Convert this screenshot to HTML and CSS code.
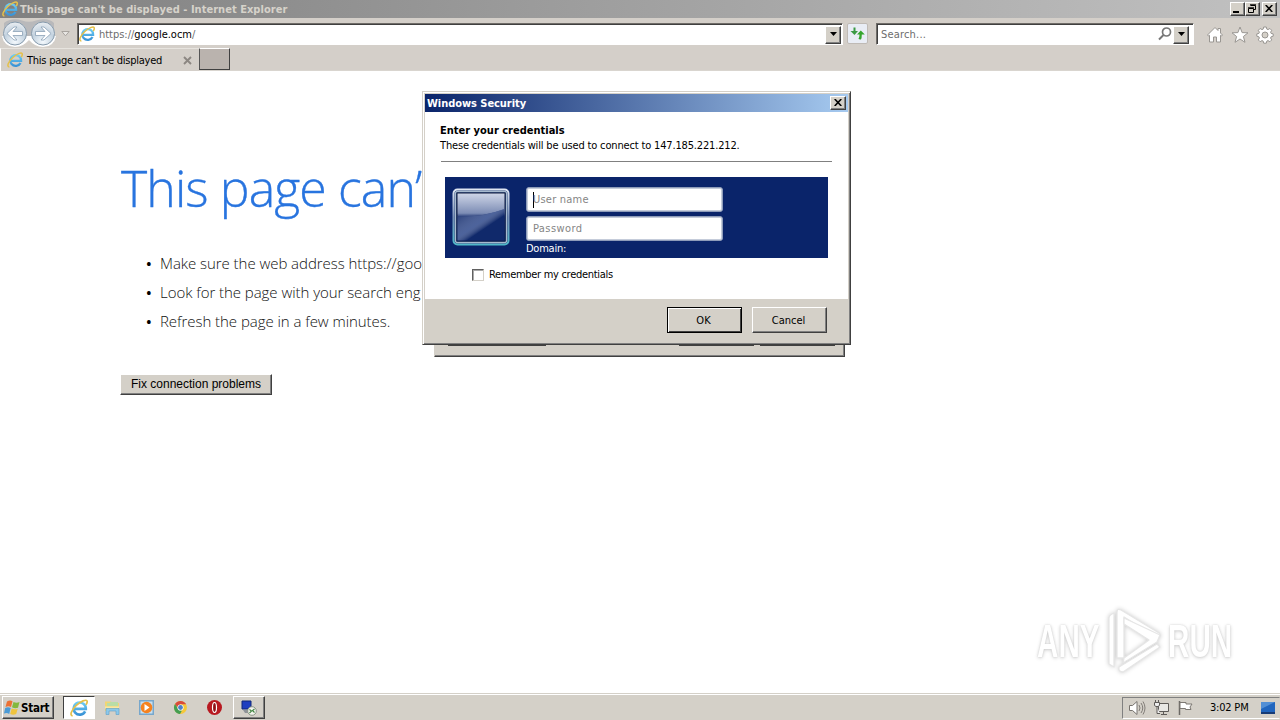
FILE: index.html
```
<!DOCTYPE html>
<html lang="en">
<head>
<meta charset="utf-8">
<title>This page can't be displayed</title>
<link rel="stylesheet" href="styles.css">
</head>
<body>
<svg class="defs" width="0" height="0">
  <defs>
    <linearGradient id="ieblue" x1="0" y1="0" x2="0" y2="1"><stop offset="0" stop-color="#6cccf4"/><stop offset="1" stop-color="#3a93d6"/></linearGradient>
    <radialGradient id="orb" cx=".5" cy=".85" r=".8"><stop offset="0" stop-color="#f4f9fd"/><stop offset=".6" stop-color="#c3d2df"/><stop offset="1" stop-color="#e6ebf0"/></radialGradient>
    <linearGradient id="tile" x1="0" y1="0" x2="0" y2="1"><stop offset="0" stop-color="#d0d7e8"/><stop offset=".42" stop-color="#7d8db5"/><stop offset=".5" stop-color="#243b78"/><stop offset="1" stop-color="#0c2466"/></linearGradient>
    <linearGradient id="frame" x1="0" y1="0" x2="0" y2="1"><stop offset="0" stop-color="#dfe6f2"/><stop offset=".5" stop-color="#7891b8"/><stop offset="1" stop-color="#50b8c8"/></linearGradient>
    <linearGradient id="sheen" x1="0" y1="0" x2="1" y2="1"><stop offset="0" stop-color="#fff" stop-opacity="0"/><stop offset=".45" stop-color="#7f93c4" stop-opacity=".55"/><stop offset=".6" stop-color="#fff" stop-opacity="0"/></linearGradient>
    <symbol id="ie" viewBox="0 0 16 16">
      <path d="M13.500 11A5.400 5.400 0 1 1 14.100 8.800H4.300" fill="none" stroke="url(#ieblue)" stroke-width="2.300"/>
      <path d="M2.400 14.900C-.6 15 1.200 9.700 5.600 5.700 9.700 1.900 14.300.1 15.100 1.700c.5 1-.2 2.400-.9 3.400" fill="none" stroke="#e5c04a" stroke-width="1.500"/>
    </symbol>
    <symbol id="down" viewBox="0 0 9 5"><path d="M1 0h7L4.500 4z"/></symbol>
    <symbol id="close" viewBox="0 0 8 7"><path d="M.7 0 7.300 7M7.300 0 .7 7" stroke="#000" stroke-width="1.600"/></symbol>
  </defs>
</svg>
<div class="screen">
  <header class="titlebar">
    <svg class="ie-icon"><use href="#ie"/></svg>
    <span class="title">This page can't be displayed - Internet Explorer</span>
    <div class="winbtns">
      <i class="wbtn"><svg width="10" height="9"><path d="M1 7h6v2H1z"/></svg></i>
      <i class="wbtn"><svg width="10" height="9"><path d="M3.500 1.500h5v4h-2M1.500 4.500h5v4h-5zM3 .8h6M1 3.800h6" fill="none" stroke="#000"/></svg></i>
      <i class="wbtn gap"><svg width="8" height="7"><use href="#close"/></svg></i>
    </div>
  </header>
  <nav class="navbar">
    <svg class="history" width="58" height="29" viewBox="0 0 58 29">
      <path d="M4 4C9 0 16-.5 22 1.500Q29 4 36 1.500C44-.5 50 0 54 4V23Q50 27 43 27 36 27 29 20 22 27 15 27 8 27 4 23z" fill="#b9b9bb"/>
      <path d="M2 17q2 11 13 11 8 0 14-7 6 7 14 7 11 0 13-11z" fill="#fff"/>
      <g fill="url(#orb)" stroke="#879bad"><circle cx="15" cy="14.500" r="11.500"/><circle cx="43" cy="14.500" r="11.500"/></g>
      <g fill="#fff" stroke="#8ca1b6" stroke-width=".8"><path d="M7 14.500l7-6.500h3L13 12.500h9.500v4H13l4 4.500h-3z"/><path d="M51 14.500l-7-6.500h-3l4 4.500h-9.500v4H45l-4 4.500h3z"/></g>
    </svg>
    <svg class="hist-arrow" width="9" height="6"><path d="M.8.500h7.400L4.500 4.800z" fill="#e8e6e3" stroke="#a9a49f"/></svg>
    <div class="field address">
      <svg class="ie-icon"><use href="#ie"/></svg>
      <span class="url">https://<b>google.ocm</b>/</span>
      <i class="drop"><svg width="9" height="5"><use href="#down"/></svg></i>
    </div>
    <i class="refresh"><svg width="17" height="15"><path d="M4.500 1.500h2v3.500h2.500L5.500 9 1.500 5h3z" fill="#3b9a44"/><path d="M12 13.500q-2 .2-2.500-.8 1-.7 1-4.200H8l3.800-4 4 4h-3q0 3.500-.8 5z" fill="#35a52c"/></svg></i>
    <div class="field search">
      <span class="hint">Search...</span>
      <svg class="lens" width="14" height="14"><circle cx="8.500" cy="5" r="4" fill="none" stroke="#777" stroke-width="1.700"/><path d="M5.500 8 1 12.500" stroke="#777" stroke-width="2"/></svg>
      <i class="drop"><svg width="9" height="5"><use href="#down"/></svg></i>
    </div>
    <div class="tools">
      <svg width="18" height="18" viewBox="0 0 18 18"><path d="M1.500 9 9 1.500l3 3V2.500h2.500V7l2 2-1 1-1-.7V16h-4v-5H7.500v5h-4V9.300l-1 .7z" fill="#fff" stroke="#999692"/></svg>
      <svg width="18" height="18" viewBox="0 0 18 18"><path d="M9 1l2.100 5.600 5.900.2-4.600 3.700 1.600 5.800L9 13l-5 3.300 1.600-5.800L1 6.800l5.900-.2z" fill="#fff" stroke="#999692"/></svg>
      <svg width="18" height="18" viewBox="0 0 18 18"><path d="M7.700 1h2.600l.5 2.100 1.200.5 1.900-1.100 1.800 1.800-1.100 1.900.5 1.200 2.100.5v2.300l-2.100.6-.5 1.200 1.100 1.900-1.800 1.800-1.900-1.100-1.200.5-.5 2.100H7.700l-.5-2.100-1.200-.5-1.900 1.100-1.800-1.800 1.100-1.900-.5-1.200L.8 10.200V7.900l2.100-.5.5-1.200-1.100-1.900 1.800-1.800L6 3.600l1.200-.5z" fill="#fff" stroke="#999692"/><circle cx="9" cy="9" r="3" fill="#d4d0c8" stroke="#999692"/></svg>
    </div>
  </nav>
  <div class="tabs">
    <div class="tab">
      <svg class="ie-icon"><use href="#ie"/></svg>
      <span class="tab-title">This page can't be displayed</span>
      <svg class="tab-close" width="9" height="9"><path d="M1 1l7 7M8 1 1 8" stroke="#8c8782" stroke-width="1.900"/></svg>
    </div>
    <div class="newtab"></div>
  </div>
  <main class="page">
    <h1>This page can’</h1>
    <ul>
      <li class="l1">Make sure the web address https://goo</li>
      <li class="l2">Look for the page with your search eng</li>
      <li class="l3">Refresh the page in a few minutes.</li>
    </ul>
    <button class="fix">Fix connection problems</button>
    <div class="watermark">
      <span class="any">ANY</span>
      <svg width="64" height="68" viewBox="0 0 64 68"><g fill="#fff" stroke="#e6e6e6" stroke-width="1.300" stroke-linejoin="round"><path d="M6 11q0-3 5-5v54l-5-3z"/><path fill-rule="evenodd" d="M14 5q0-4 4-2L56 26q3 3-1 5L21 10v41h-7z"/><path d="M21 17l25 16-25 18-1 5L54 35l3-7-36-17z"/><path d="M16 60l38-23 3 3-37 25q-5 0-4-5z"/></g></svg>
      <span class="run">RUN</span>
    </div>
  </main>
  <footer class="taskbar">
    <div class="start"><svg width="17" height="15"><path d="M3 1.500Q6-.5 8.500 1.200L7 7Q4.500 5.500 1.500 7z" fill="#ec7134"/><path d="M9.500 2q3 1.500 6 0L14 7.800q-3 1.200-6-.5z" fill="#83b83f"/><path d="M1.200 8Q4 6.500 6.700 8l-1.500 6Q3 12.300 0 13.500z" fill="#4b9bd6"/><path d="M7.700 8.500q3 1.500 6 .3L12.200 14q-3 1.500-6 0z" fill="#efc43e"/></svg><span>Start</span></div>
    <div class="task current"><svg width="18" height="18"><use href="#ie"/></svg></div>
    <div class="launch">
      <svg width="17" height="17"><path d="M1 2.500h6l1 1.500h7v8H1z" fill="#f1d673"/><path d="M3 4h3V3h8v4H3z" fill="#b9dda7"/><path d="M1 7.500h14v2H1z" fill="#f6e7a6"/><path d="M2 9.500h13v6h-3v-3.500H5v3.500H2z" fill="#8cc8ea" stroke="#5ba0ca" stroke-width=".6"/></svg>
      <svg width="17" height="17"><path d="M1 1h15v15H1z" fill="#77a7cc"/><path d="M2.500 2.500h12v12h-12z" fill="#c8dfef"/><circle cx="8.500" cy="8.500" r="5.800" fill="#f5821f"/><path d="M6.500 5v7l5-3.500z" fill="#fff"/></svg>
      <svg width="17" height="17"><circle cx="8.500" cy="8.500" r="6.500" fill="#f5c83a"/><path d="M3 5A6.500 6.500 0 0 1 14.200 5.300H8L6 9z" fill="#d94a3c"/><path d="M3 5l4 6 3 .5-2 3.500A6.500 6.500 0 0 1 3 5z" fill="#449e52"/><circle cx="8.500" cy="8.500" r="3.100" fill="#fff"/><circle cx="8.500" cy="8.500" r="2.400" fill="#4e80c7"/></svg>
      <svg width="17" height="17"><circle cx="8.500" cy="8.500" r="7.500" fill="#b81920"/><ellipse cx="8.500" cy="8.500" rx="2" ry="5" fill="#901016" stroke="#fff" stroke-width="1.200"/></svg>
    </div>
    <div class="task rdp"><svg width="18" height="18"><path d="M2 2h9v8H2z" fill="#1f3fc0" stroke="#102878"/><path d="M3 11h8v3H5z" fill="#8f9399"/><circle cx="12" cy="12" r="4.300" fill="#f3f4ed" stroke="#8d9589"/><path d="M9.500 10.500l2 1.500-2 2M14.500 10l-2 1.500 2 2" fill="none" stroke="#438643" stroke-width="1.100"/></svg></div>
    <div class="tray">
      <svg class="vol" width="18" height="16"><path d="M1.500 5.500h3L9 1.500v13l-4.500-4h-3z" fill="#fff" stroke="#77736e"/><path d="M11 5q2 3 0 6M13 3q3.500 5 0 10M15 1.500q4 6.500 0 13" fill="none" stroke="#77736e" stroke-width=".9"/></svg>
      <svg class="net" width="18" height="16"><path d="M5.500 3.500h10v8h-10zM8 14.500h6M10.500 12v2" fill="#e8e7e4" stroke="#5e5b58"/><path d="M2.500 0v2M5.500 0v2M1.500 2.500h5v3l-1.500 1H3l-1.500-1zM4 6.500v7h3" fill="#eee" stroke="#5e5b58"/></svg>
      <svg class="flag" width="17" height="16"><path d="M2.500 1v14" stroke="#6c6965" stroke-width="1.500"/><path d="M3 2.500h6V4h6l-2 3 1 2.500H8.500V8.500H3z" fill="#fff" stroke="#7c7873"/></svg>
      <span class="clock">3:02 PM</span>
      <svg class="desk" width="16" height="14"><path d="M1 1h14v10H1z" fill="#2065be"/><path d="M1 1h14L1 8z" fill="#528fd5"/><path d="M1 11h14v2H1z" fill="#173b76"/></svg>
    </div>
  </footer>
</div>
<div class="under-dialog"><i class="u1"></i><i class="u2"></i><i class="u3"></i></div>
<section class="dialog">
  <div class="dlg-title"><span>Windows Security</span><i class="wbtn"><svg width="8" height="7"><use href="#close"/></svg></i></div>
  <div class="dlg-body">
    <div class="dlg-head"><h2>Enter your credentials</h2><p>These credentials will be used to connect to 147.185.221.212.</p></div>
    <div class="creds">
      <svg class="avatar" width="58" height="58"><rect x="1.500" y="1.500" width="55" height="55" rx="4" fill="#213c76" stroke="url(#frame)" stroke-width="2"/><rect x="3.500" y="3.500" width="51" height="51" rx="2" fill="none" stroke="#a7bace" stroke-width="1.300"/><rect x="5" y="5" width="48" height="48" fill="url(#tile)" stroke="#101d3f"/><path d="M5.500 28Q28 30 52.500 21V52.500H5.500z" fill="#10296b"/><path d="M5.500 28Q28 30 52.500 21V52.500H5.500z" fill="url(#sheen)"/></svg>
      <div class="inputs"><div class="input"><i class="caret"></i><span class="user">User name</span></div><div class="input"><span class="pass">Password</span></div><span class="domain">Domain:</span></div>
    </div>
    <label class="remember"><i class="box"></i><span>Remember my credentials</span></label>
  </div>
  <div class="dlg-foot"><div class="btn ok"><span>OK</span></div><div class="btn cancel"><span>Cancel</span></div></div>
</section>
</body>
</html>
```
FILE: styles.css
```
*{box-sizing:border-box}
body{margin:0;font:11px/14px "DejaVu Sans Condensed","DejaVu Sans",sans-serif;font-stretch:condensed;color:#000;overflow:hidden;background:#fff}
svg{display:block;flex:none}
.defs{position:absolute}
i{font-style:normal}
span{white-space:nowrap}
.screen{width:1280px;height:720px;display:flex;flex-direction:column}
.ie-icon{width:16px;height:16px}
.titlebar{height:18px;display:flex;align-items:center;padding:0 3px 0 2px;gap:2px;background:linear-gradient(90deg,#808080,#c1c1c1)}
.title{font-weight:bold;color:#d6d2ca;letter-spacing:.03px;padding-top:1px}
.winbtns{margin-left:auto;display:flex}
.wbtn{width:15px;height:14px;background:#d4d0c8;border:1px solid;border-color:#fff #404040 #404040 #fff;box-shadow:inset -1px -1px #808080;display:flex;align-items:center;justify-content:center;padding:0 1px 1px 0;flex:none}
.gap{margin-left:2px}
.navbar{height:30px;background:#d4cfc9;display:flex;align-items:flex-start;flex:none}
.history{margin:1px 0 0}
.hist-arrow{margin:13px 0 0 3px}
.field{height:22px;background:#fff;border:1px solid;border-color:#6f6c68 #fff #fff #6f6c68;box-shadow:inset 1px 1px #404040;display:flex;align-items:center}
.address{width:766px;margin:5px 0 0 7px;padding-left:1px}
.url{margin-left:4px;color:#6d6d6d;letter-spacing:-.02px;padding-top:1px}
.url b{font-weight:normal;color:#000}
.drop{width:16px;height:18px;background:#d4d0c8;border:1px solid;border-color:#fff #404040 #404040 #fff;box-shadow:inset -1px -1px #808080;display:flex;align-items:center;justify-content:center;margin:1px 1px 0 auto;flex:none}
.refresh{width:21px;height:21px;margin:5px 0 0 4px;border:1px solid #bfbab5;background:#e9edf5;display:flex;align-items:center;justify-content:center;border-radius:2px}
.search{width:318px;margin:5px 0 0 8px;padding-left:4px}
.hint{color:#6d6d6d;letter-spacing:.18px;padding-top:1px}
.lens{margin:0 1px 0 auto}
.search .drop{margin:1px 4px 0 0}
.tools{display:flex;gap:7px;margin:8px 0 0 12px}
.tabs{height:23px;background:#d4cfc9;display:flex;border-bottom:1px solid #d9d5cf;flex:none}
.tab{width:199px;height:23px;border-left:1px solid #fff;border-top:1px solid #e7e4df;display:flex;align-items:center;padding-left:6px;background:#d4cfc9;flex:none}
.tab-title{margin-left:4px;letter-spacing:-.24px;padding-top:1px;width:136px}
.tab-close{margin-left:20px}
.newtab{width:31px;height:22px;background:#bab3ae;border:1px solid;border-color:#fff #404040 #404040 #555}
.page{flex:1;background:#fff;position:relative;padding:0 0 0 120px}
h1{font:300 50px/60px "Open Sans",sans-serif;color:#2874df;margin:0;padding:87px 0 1px 1px;letter-spacing:-.9px;white-space:nowrap;-webkit-text-stroke:.35px #2874df}
ul{list-style:none;margin:30px 0 0;padding:0}
li{font:300 15px/29px "Open Sans",sans-serif;height:29px;padding-left:26px;white-space:nowrap;color:#111;letter-spacing:-.05px}
li::before{content:"•";display:inline-block;width:14px;color:#000;font-weight:600}
.fix{display:block;font:12px/14px "Liberation Sans",sans-serif;width:152px;height:21px;margin:38px 0 0;padding:0 0 1px;background:#d4d0c8;border:1px solid;border-color:#fff #404040 #404040 #fff;box-shadow:inset -1px -1px #808080;color:#000;white-space:nowrap}
.watermark{position:absolute;left:1037px;top:536px;width:200px;height:68px;display:flex;align-items:center;gap:1px;font:bold 47px/60px "Liberation Sans",sans-serif;color:#fff;text-shadow:0 0 2px #ccc,0 1px 5px #ccc}
.watermark svg{filter:drop-shadow(0 0 2px #ccc)}
.watermark span{width:65px;transform:scaleX(.63);transform-origin:0 50%;flex:none}
.taskbar{height:27px;background:#d4d0c8;border-top:1px solid #d4d0c8;box-shadow:inset 0 1px #fff;display:flex;align-items:center;padding:1px 2px 0;flex:none}
.start,.task{height:23px;border:1px solid;border-color:#fff #404040 #404040 #fff;box-shadow:inset -1px -1px #808080;display:flex;align-items:center}
.start{width:52px;font-weight:bold;font-size:11.500px;padding-left:1px}
.start span{letter-spacing:-.25px}
.task{width:32px;justify-content:center}
.current{margin-left:9px;background:#fff;border-color:#404040 #fff #fff #404040;box-shadow:none}
.launch{display:flex;gap:17px;margin-left:9px}
.rdp{margin-left:10px}
.tray{height:22px;width:158px;margin-left:auto;margin-right:-2px;border:1px solid;border-color:#808080 transparent #fff #808080;display:flex;align-items:center;padding-left:5px}
.net{margin-left:7px}.flag{margin-left:6px}
.clock{margin-left:16px;letter-spacing:-.2px}
.desk{margin-left:12px}
.under-dialog{position:absolute;left:434px;top:330px;width:411px;height:27px;background:#d4d0c8;border:1px solid;border-color:#d4d0c8 #404040 #404040 #d4d0c8;box-shadow:inset -1px -1px #808080;padding:14px 9px 0 13px;display:flex}
.under-dialog i{height:1px;background:#404040}
.u1{width:98px}.u2{width:75px;margin-left:133px}.u3{width:75px;margin-left:6px}
.dialog{position:absolute;left:422px;top:91px;width:429px;height:254px;background:#d4d0c8;border:1px solid;border-color:#d4d0c8 #404040 #404040 #d4d0c8;box-shadow:inset 1px 1px #fff,inset -1px -1px #808080;padding:2px;display:flex;flex-direction:column}
.dlg-title{height:18px;background:linear-gradient(90deg,#0a246a,#a6caf0);display:flex;align-items:center;padding:0 2px;color:#fff;font-weight:bold;flex:none}
.dlg-title span{letter-spacing:-.05px;padding-top:1px}
.dlg-title .wbtn{margin-left:auto;width:16px;color:#000}
.dlg-body{height:187px;background:#fff;padding:11px 16px 0 15px;flex:none}
.dlg-head{height:39px;border-bottom:1px solid #808080;width:391px;margin-left:1px}
h2{font-size:11px;line-height:15px;margin:0 0 0 -1px;letter-spacing:0}
p{margin:0 0 0 -1px;line-height:15px;white-space:nowrap;letter-spacing:-.16px}
.creds{height:81px;width:383px;background:#0a246a;margin:15px 0 0 5px;padding:9px 0 0 7px;display:flex}
.avatar{margin-top:2px}
.inputs{margin-left:16px;padding-top:1px}
.input{width:197px;height:25px;background:#fff;border:1px solid #8e9cb9;border-radius:3px;box-shadow:inset 0 0 0 1px #c5ccda;margin-bottom:4px;display:flex;align-items:center;padding-left:6px;color:#858585}
.input span{padding-top:1px}
.caret{width:1px;height:16px;background:#000;margin-right:-1px}
.user{letter-spacing:.22px}.pass{letter-spacing:.4px}
.domain{display:block;color:#fff;margin-top:-3px;letter-spacing:-.25px}
.remember{display:flex;align-items:center;margin:9px 0 0 32px;gap:5px}
.box{width:12px;height:12px;border:1px solid;border-color:#606060 #d4d0c8 #d4d0c8 #606060;box-shadow:inset 1px 1px #aaa}
.remember span{letter-spacing:-.3px;padding-top:1px}
.dlg-foot{display:flex;padding:8px 0 0 242px;gap:10px}
.btn{width:75px;height:26px;border:1px solid;border-color:#fff #404040 #404040 #fff;box-shadow:inset -1px -1px #808080;display:flex;align-items:center;justify-content:center}
.btn span{padding-top:1px}
.ok{border-color:#000;box-shadow:inset 1px 1px #fff,inset -1px -1px #404040;padding-right:2px}
.cancel{padding-right:2px}
```
